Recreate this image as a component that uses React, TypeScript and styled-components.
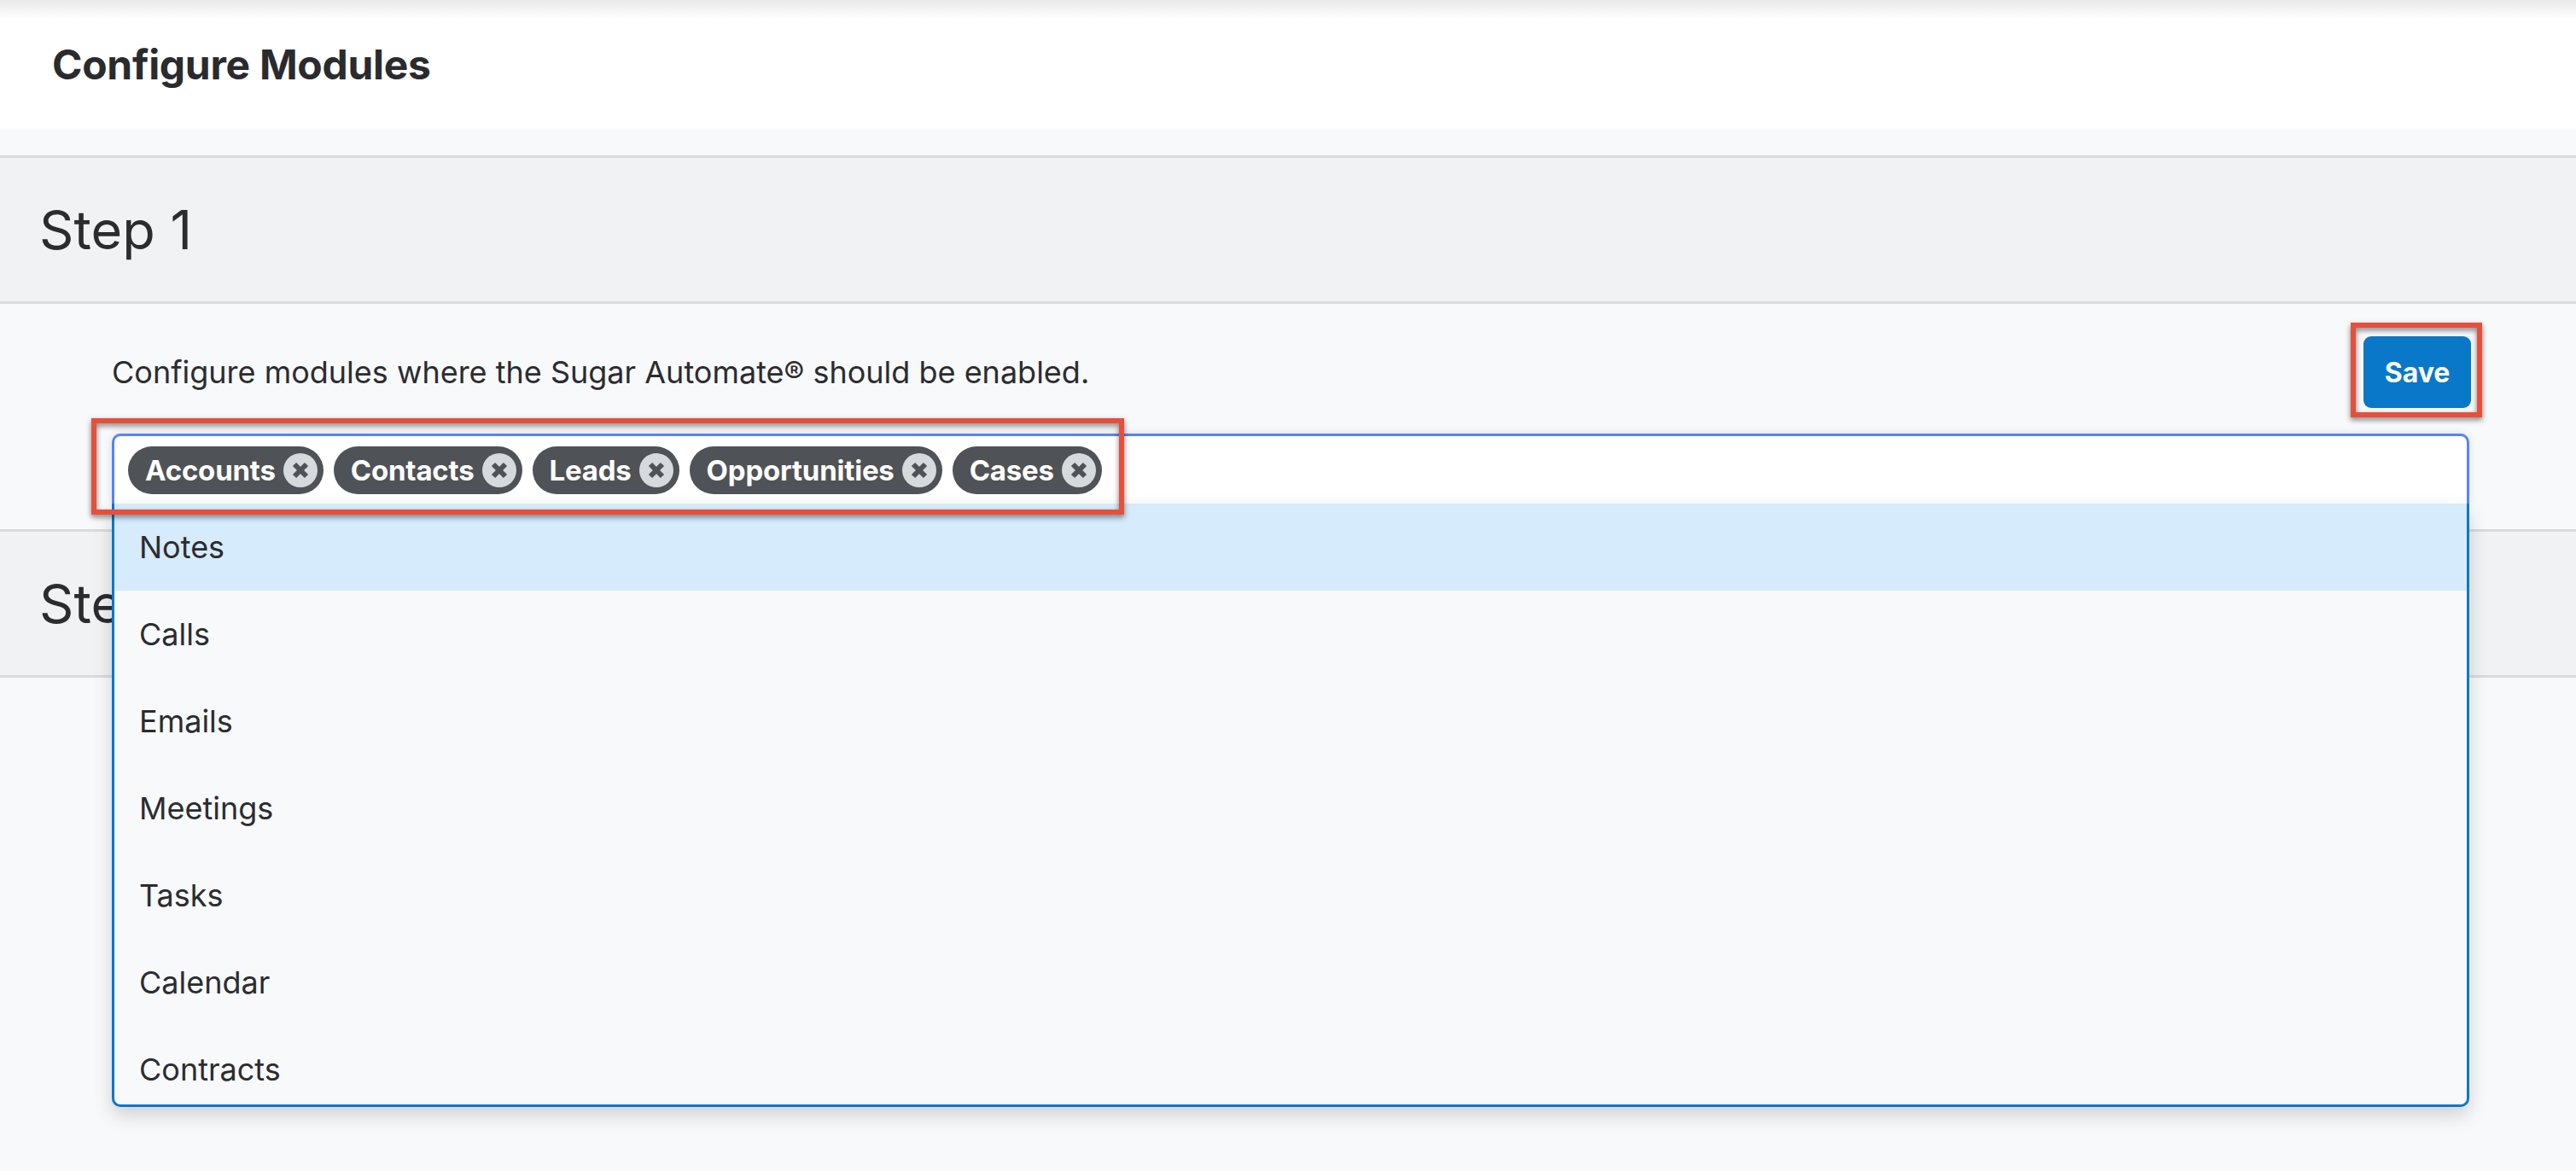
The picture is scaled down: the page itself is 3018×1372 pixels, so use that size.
import React from "react";
import styled, { createGlobalStyle } from "styled-components";

const GlobalStyle = createGlobalStyle`
  html, body { margin: 0; padding: 0; }
  body {
    background: #f8f9fb;
    font-family: Inter, "Noto Sans", "Liberation Sans", sans-serif;
    color: #2b2c30;
  }
  * { box-sizing: border-box; }
`;

const Page = styled.div`
  width: 3018px;
  min-height: 1372px;
  background: #f8f9fb;
  overflow: hidden;
`;

const Header = styled.header`
  position: relative;
  height: 151px;
  background: #ffffff;
  display: flex;
  align-items: center;
  padding-left: 61px;
  &::before {
    content: "";
    position: absolute;
    left: 0;
    right: 0;
    top: 0;
    height: 22px;
    background: linear-gradient(to bottom, rgba(0, 0, 0, 0.09), rgba(0, 0, 0, 0));
  }
`;

const Title = styled.h1`
  margin: 0;
  font-size: 48px;
  font-weight: 700;
  letter-spacing: -0.3px;
  color: #2a2b2e;
`;

const Steps = styled.div`
  margin-top: 31px;
`;

const StepHeader = styled.div`
  height: 174px;
  background: #f1f2f4;
  border-top: 3px solid #dadbdc;
  border-bottom: 3px solid #dadbdc;
  display: flex;
  align-items: center;
  padding-left: 46px;
  font-size: 63px;
  font-weight: 400;
  color: #2b2c30;
`;

const StepBody = styled.div`
  padding: 38px 125px 30px 131px;
  background: #f8f9fb;
`;

const TopRow = styled.div`
  display: flex;
  align-items: center;
  justify-content: space-between;
`;

const Description = styled.p`
  margin: 0;
  font-size: 36px;
  color: #2b2c30;
`;

const Marked = styled.div`
  position: relative;
`;

const RedBox = styled.div<{ $l: number; $t: number; $w: number; $h: number }>`
  position: absolute;
  left: ${(p) => p.$l}px;
  top: ${(p) => p.$t}px;
  width: ${(p) => p.$w}px;
  height: ${(p) => p.$h}px;
  border: 6px solid #e6503b;
  filter: drop-shadow(0 3px 3px rgba(0, 0, 0, 0.5));
  pointer-events: none;
  z-index: 5;
`;

const SaveButton = styled.button`
  width: 126px;
  height: 84px;
  border: none;
  border-radius: 9px;
  background: #0a78c8;
  color: #ffffff;
  font-family: Inter, "Noto Sans", sans-serif;
  font-size: 32px;
  font-weight: 700;
  cursor: pointer;
  margin-right: -2px;
`;

const SelectWrap = styled.div`
  position: relative;
  margin-top: 30px;
`;

const InputBox = styled.div`
  height: 82px;
  background: #ffffff;
  border: 3px solid #5585f6;
  border-bottom: none;
  border-radius: 10px 10px 0 0;
  display: flex;
  align-items: flex-start;
  gap: 12px;
  padding: 12px 16px 0;
  box-shadow: 0 0 10px rgba(0, 0, 0, 0.12);
`;

const Chip = styled.span`
  display: inline-flex;
  align-items: center;
  flex-shrink: 0;
  height: 56px;
  border-radius: 28px;
  background: #4f5256;
  color: #ffffff;
  font-size: 33px;
  font-weight: 700;
  letter-spacing: -0.2px;
  padding: 0 7px 0 20px;
  gap: 9px;
  white-space: nowrap;
  svg { flex-shrink: 0; }
`;

const CloseIcon = () => (
  <svg width="40" height="40" viewBox="0 0 40 40">
    <circle cx="20" cy="20" r="20" fill="#d7dadd" />
    <path d="M13 13 L27 27 M27 13 L13 27" stroke="#4f5256" strokeWidth="6" strokeLinecap="butt" />
  </svg>
);

const Menu = styled.ul`
  position: absolute;
  left: 0;
  right: 0;
  top: 100%;
  max-height: 707px;
  margin: 0;
  padding: 0;
  list-style: none;
  background: #f8f9fb;
  border: 3px solid #0a78c8;
  border-top: none;
  border-radius: 0 0 10px 10px;
  box-shadow: 0 10px 22px rgba(0, 0, 0, 0.16);
  z-index: 4;
  overflow: hidden;
`;

const MenuItem = styled.li<{ $active?: boolean }>`
  height: 102px;
  display: flex;
  align-items: center;
  padding-left: 29px;
  font-size: 36px;
  color: #2b2c30;
  background: ${(p) => (p.$active ? "#d6ebfb" : "transparent")};
`;

const chips = ["Accounts", "Contacts", "Leads", "Opportunities", "Cases"];
const options = ["Notes", "Calls", "Emails", "Meetings", "Tasks", "Calendar", "Contracts"];

export default function App() {
  return (
    <Page>
      <GlobalStyle />
      <Header>
        <Title>Configure Modules</Title>
      </Header>
      <Steps>
        <StepHeader>Step 1</StepHeader>
        <StepBody>
          <TopRow>
            <Description>Configure modules where the Sugar Automate® should be enabled.</Description>
            <Marked>
              <SaveButton>Save</SaveButton>
              <RedBox $l={-15} $t={-16} $w={154} $h={111} />
            </Marked>
          </TopRow>
          <SelectWrap>
            <InputBox>
              {chips.map((c) => (
                <Chip key={c}>
                  {c}
                  <CloseIcon />
                </Chip>
              ))}
            </InputBox>
            <RedBox $l={-24} $t={-18} $w={1210} $h={113} />
            <Menu>
              {options.map((o, i) => (
                <MenuItem key={o} $active={i === 0}>
                  {o}
                </MenuItem>
              ))}
            </Menu>
          </SelectWrap>
        </StepBody>
        <StepHeader>Step 2</StepHeader>
      </Steps>
    </Page>
  );
}
